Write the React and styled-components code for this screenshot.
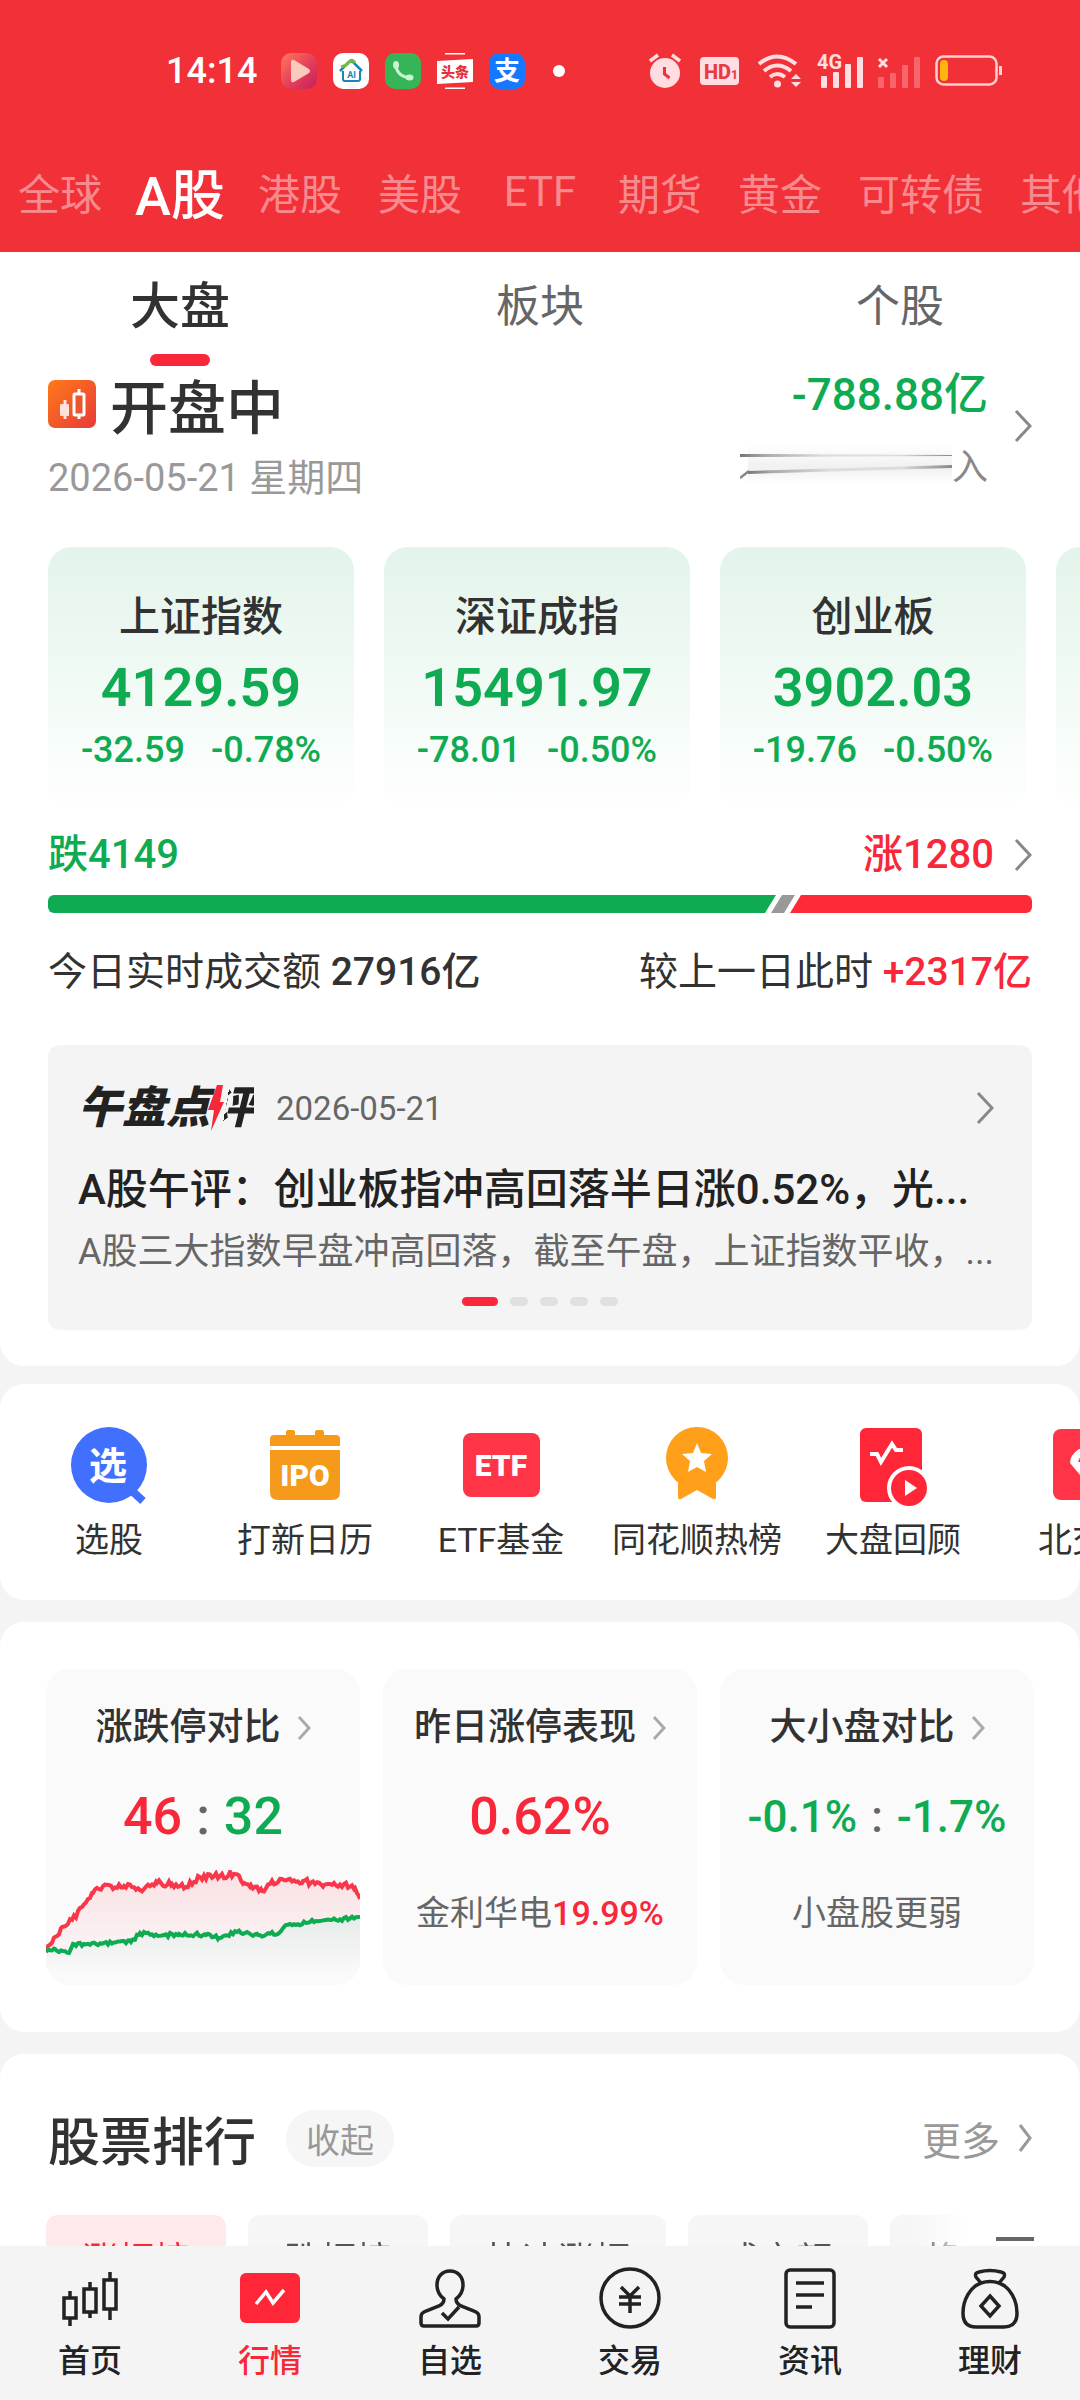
import React from "react"
import styled, { createGlobalStyle, css } from "styled-components"

const red = "#f8273a"
const green = "#0fab52"

const GlobalStyle = createGlobalStyle`
  * {
    box-sizing: border-box;
  }
  body {
    margin: 0;
    background: #f4f4f4;
    color: #323232;
    font-family: Roboto, "Noto Sans CJK SC", sans-serif;
    -webkit-font-smoothing: antialiased;
  }
  button {
    border: 0;
    padding: 0;
    background: none;
    color: inherit;
    font: inherit;
  }
  a {
    color: inherit;
    text-decoration: none;
  }
  h2, h3, p {
    margin: 0;
    font-weight: 400;
  }
  svg {
    display: block;
    flex: none;
  }
`

const Shell = styled.div`
  display: grid;
  grid-template-rows: minmax(0, 1fr) auto;
  height: 100vh;
  overflow: hidden;
`

const Content = styled.main`
  min-height: 0;
  overflow: hidden;
`

/* header */

const Header = styled.header`
  padding-top: 51px;
  background: #f23037;
  color: #fff;
`

const StatusBar = styled.div`
  display: flex;
  align-items: center;
  justify-content: space-between;
  height: 40px;
  padding: 0 77px 0 166px;
`

const StatusGroup = styled.div`
  display: flex;
  align-items: center;
  gap: ${({ $gap }) => $gap}px;
`

const Clock = styled.span`
  margin-right: 8px;
  font-size: 36px;
  font-weight: 500;
`

const Dot = styled.span`
  width: 12px;
  height: 12px;
  margin-left: 12px;
  border-radius: 50%;
  background: #fff;
`

const MarketNav = styled.nav`
  display: flex;
  gap: 36px;
  margin-top: 68px;
  padding: 0 18px 29px;
  overflow: hidden;
`

const MarketTab = styled.button`
  display: flex;
  flex: none;
  align-items: center;
  justify-content: center;
  width: ${({ $wide }) => ($wide ? 126 : 84)}px;
  height: 64px;
  color: rgba(255, 255, 255, 0.45);
  font-size: 42px;
  white-space: nowrap;
  ${({ $active }) =>
    $active &&
    css`
      color: #fff;
      font-size: 54px;
      font-weight: 500;
    `}
`

/* panels */

const Panel = styled.section`
  margin-top: ${({ $first }) => ($first ? 0 : 22)}px;
  border-radius: ${({ $first }) => ($first ? "0 0 24px 24px" : "24px")};
  background: #fff;
  overflow: hidden;
`

const SubTabs = styled.nav`
  display: grid;
  grid-template-columns: repeat(3, 1fr);
  padding-top: 25px;
`

const SubTab = styled.button`
  display: flex;
  flex-direction: column;
  align-items: center;
  gap: 17px;
  color: #666;
  font-size: 44px;
  line-height: 60px;
  &::after {
    content: "";
    width: 60px;
    height: 12px;
    border-radius: 6px;
    background: ${({ $active }) => ($active ? red : "transparent")};
  }
  ${({ $active }) =>
    $active &&
    css`
      color: #323232;
      font-size: 50px;
      font-weight: 500;
    `}
`

const Summary = styled.div`
  display: flex;
  align-items: flex-start;
  justify-content: space-between;
  padding: 4px 48px 0;
`

const MarketState = styled.h2`
  display: flex;
  align-items: center;
  gap: 14px;
  height: 68px;
  font-size: 58px;
  font-weight: 500;
`

const Today = styled.p`
  margin-top: 15px;
  color: #999;
  font-size: 38px;
  line-height: 50px;
`

const FlowLink = styled.a`
  display: flex;
  align-items: center;
  gap: 26px;
`

const FlowValue = styled.div`
  color: ${green};
  font-size: 44px;
  font-weight: 500;
  line-height: 50px;
  text-align: right;
`

const FlowLabel = styled.div`
  display: flex;
  align-items: center;
  justify-content: flex-end;
  height: 36px;
  margin-top: 26px;
  color: #888;
  font-size: 36px;
`

const IndexRow = styled.div`
  display: grid;
  grid-auto-flow: column;
  grid-auto-columns: calc((100% - 114px) / 3);
  gap: 30px;
  padding: 44px 0 0 48px;
  overflow: hidden;
`

const IndexCard = styled.a`
  height: 266px;
  padding-top: 45px;
  border-radius: 24px;
  background: linear-gradient(#e3f4ea, #f1faf5 50%, #fff);
  text-align: center;
  white-space: nowrap;
`

const IndexName = styled.h3`
  font-size: 41px;
  font-weight: 500;
  line-height: 50px;
`

const IndexPrice = styled.div`
  margin-top: 16px;
  color: ${green};
  font-size: 54px;
  font-weight: 600;
  line-height: 60px;
`

const IndexChange = styled.div`
  display: flex;
  justify-content: center;
  gap: 26px;
  margin-top: 12px;
  color: ${green};
  font-size: 36px;
  font-weight: 500;
  line-height: 40px;
`

const Row = styled.div`
  display: flex;
  align-items: center;
  justify-content: space-between;
  margin-top: ${({ $top }) => $top}px;
  padding: 0 48px;
  font-size: ${({ $size }) => $size}px;
  line-height: 50px;
`

const Tone = styled.span`
  color: ${({ $color }) => $color};
  font-weight: 500;
`

const WithArrow = styled.a`
  display: flex;
  align-items: center;
  gap: 20px;
`

const BreadthBar = styled.div`
  display: flex;
  height: 18px;
  margin: 15px 48px 0;
`

const FallPart = styled.div`
  flex: 728 1 0;
  border-radius: 6px 0 0 6px;
  background: ${green};
  clip-path: polygon(0 0, 100% 0, calc(100% - 11px) 100%, 0 100%);
`

const FlatPart = styled.div`
  flex: none;
  width: 24px;
  margin: 0 -5px;
  background: #999;
  clip-path: polygon(11px 0, 100% 0, calc(100% - 11px) 100%, 0 100%);
`

const RisePart = styled.div`
  flex: 242 1 0;
  border-radius: 0 6px 6px 0;
  background: #ff2a38;
  clip-path: polygon(11px 0, 100% 0, 100% 100%, 0 100%);
`

/* commentary */

const Commentary = styled.article`
  margin: 48px 48px 36px;
  padding: 33px 30px 24px;
  border-radius: 12px;
  background: #f4f4f4;
`

const CommentaryHead = styled.div`
  display: flex;
  align-items: center;
  height: 60px;
  padding-right: 8px;
  color: #666;
  font-size: 33px;
`

const CommentaryLogo = styled.h2`
  position: relative;
  margin-right: 22px;
  color: #222;
  font-size: 44px;
  font-style: italic;
  font-weight: 900;
  line-height: 60px;
  svg {
    position: absolute;
    top: 7px;
    left: 130px;
  }
`

/* the left part of the last character gives way to the bolt */
const HalfChar = styled.span`
  background: linear-gradient(100deg, transparent 38%, #222 38%);
  background-clip: text;
  -webkit-background-clip: text;
  color: transparent;
`

const PushRight = styled.span`
  margin-left: auto;
`

const Headline = styled.h3`
  margin-top: 24px;
  color: #222;
  font-size: 42px;
  font-weight: 500;
  line-height: 56px;
  white-space: nowrap;
  overflow: hidden;
  text-overflow: ellipsis;
`

const Excerpt = styled.p`
  margin-top: 10px;
  color: #666;
  font-size: 36px;
  line-height: 48px;
  white-space: nowrap;
  overflow: hidden;
  text-overflow: ellipsis;
`

const Pager = styled.div`
  display: flex;
  justify-content: center;
  gap: 12px;
  margin-top: 21px;
`

const PagerDot = styled.span`
  width: ${({ $active }) => ($active ? 36 : 18)}px;
  height: 9px;
  border-radius: 5px;
  background: ${({ $active }) => ($active ? red : "#e0e0e0")};
`

/* shortcuts */

const ShortcutPanel = styled(Panel)`
  display: flex;
  margin-top: 18px;
  padding: 32px 0 40px 11px;
`

const Shortcut = styled.a`
  display: flex;
  flex: none;
  flex-direction: column;
  align-items: center;
  gap: 8px;
  width: 196px;
  font-size: 34px;
  line-height: 40px;
  white-space: nowrap;
`

/* comparison cards */

const ComparePanel = styled(Panel)`
  display: grid;
  grid-template-columns: repeat(3, minmax(0, 1fr));
  gap: 23px;
  padding: 47px 46px;
`

const CompareCard = styled.a`
  display: flex;
  flex-direction: column;
  align-items: center;
  height: 316px;
  padding-top: 34px;
  border-radius: 24px;
  background: #fafafa;
  overflow: hidden;
  white-space: nowrap;
`

const CompareTitle = styled.h3`
  display: flex;
  align-items: center;
  gap: 16px;
  font-size: 37px;
  font-weight: 500;
  line-height: 50px;
`

const CompareValue = styled.div`
  display: flex;
  gap: 14px;
  margin-top: 34px;
  color: #666;
  font-size: ${({ $small }) => ($small ? 44 : 52)}px;
  font-weight: 500;
  line-height: 60px;
`

const CompareNote = styled.p`
  margin-top: 44px;
  color: #666;
  font-size: 34px;
  line-height: 44px;
`

const Chart = styled.svg`
  width: 100%;
  height: 115px;
  margin-top: 23px;
`

/* ranking */

const RankHead = styled.div`
  display: flex;
  align-items: center;
  height: 60px;
  margin-top: 54px;
  padding: 0 48px;
  color: #999;
`

const RankTitle = styled.h2`
  margin-right: 30px;
  color: #323232;
  font-size: 52px;
  font-weight: 500;
`

const Collapse = styled.button`
  height: 57px;
  padding: 0 20px;
  border-radius: 29px;
  background: #f6f6f6;
  font-size: 34px;
`

const MoreLink = styled(WithArrow)`
  gap: 18px;
  margin-left: auto;
  font-size: 39px;
`

const ChipRow = styled.div`
  display: flex;
  margin-top: 47px;
  padding: 0 46px;
`

const ChipScroller = styled.div`
  display: flex;
  flex: 1;
  gap: 22px;
  min-width: 0;
  overflow: hidden;
  mask-image: linear-gradient(to right, #000 calc(100% - 80px), transparent calc(100% - 24px));
`

const Chip = styled.button`
  flex: none;
  height: 92px;
  padding: 0 36px;
  border-radius: 12px;
  background: ${({ $active }) => ($active ? "#ffe9ea" : "#f6f6f6")};
  color: ${({ $active }) => ($active ? red : "#555")};
  font-size: 36px;
  line-height: 92px;
`

const MenuButton = styled.button`
  display: flex;
  align-items: flex-start;
  padding-top: 22px;
`

/* bottom bar */

const BottomBar = styled.nav`
  display: grid;
  grid-template-columns: repeat(6, 1fr);
  padding: 20px 0 19px;
  background: #f4f4f4;
`

const BottomItem = styled.a`
  display: flex;
  flex-direction: column;
  align-items: center;
  gap: 11px;
  color: ${({ $active }) => ($active ? red : "#222")};
  font-size: 32px;
  font-weight: 500;
  line-height: 40px;
`

const Chevron = ({ width = 18, height = 34, color = "#888", stroke = 3 }) => (
  <svg width={width} height={height} viewBox={`0 0 ${width} ${height}`} fill="none">
    <path
      d={`M2 2 L${width - 2} ${height / 2} L2 ${height - 2}`}
      stroke={color}
      strokeWidth={stroke}
    />
  </svg>
)

const AppIcons = () => (
  <>
    <svg width="36" height="36" viewBox="0 0 36 36">
      <defs>
        <linearGradient id="play" x1="0" y1="0" x2="1" y2="1">
          <stop offset="0" stopColor="#ff7a5c" />
          <stop offset="0.5" stopColor="#e8415a" />
          <stop offset="1" stopColor="#c4205c" />
        </linearGradient>
      </defs>
      <rect width="36" height="36" rx="10" fill="url(#play)" />
      <path d="M10 9q0-3 3-2l15 9q2 2 0 4l-15 9q-3 1-3-2z" fill="#fcc9bd" />
    </svg>
    <svg width="36" height="36" viewBox="0 0 36 36" fill="none">
      <rect width="36" height="36" rx="10" fill="#fff" />
      <path d="M7 18 16 9q2-1 4 0l9 9" stroke="#1786b8" strokeWidth="2.5" />
      <path d="M8 14q5-1 8-5t6 1" stroke="#7db83c" strokeWidth="3" />
      <path d="M10 18v8q0 2 2 2h13q2 0 2-2v-8" stroke="#1786b8" strokeWidth="2" />
      <text x="18.5" y="25" fill="#1786b8" fontSize="9" fontWeight="700" textAnchor="middle">AI</text>
    </svg>
    <svg width="36" height="36" viewBox="0 0 36 36" fill="none">
      <rect width="36" height="36" rx="10" fill="#35b558" />
      <path d="M11 11q0 12 14 14" stroke="#c9f5d3" strokeWidth="3" />
      <ellipse cx="11" cy="12" rx="3" ry="4" fill="#c9f5d3" />
      <ellipse cx="24.5" cy="24.5" rx="4" ry="3" fill="#c9f5d3" />
    </svg>
    <svg width="36" height="36" viewBox="0 0 36 36">
      <path d="M8 .8h20M8 35.2h20" stroke="#fff" strokeWidth="1.5" />
      <path d="M0 8l36-2v23l-36 2z" fill="#fff" />
      <text x="18" y="24" fill="#e8303c" fontSize="14" fontWeight="900" textAnchor="middle">头条</text>
    </svg>
    <svg width="36" height="36" viewBox="0 0 36 36">
      <rect width="36" height="36" rx="10" fill="#1677ff" />
      <text x="18" y="27" fill="#fff" fontSize="26" fontWeight="700" textAnchor="middle">支</text>
    </svg>
  </>
)

const SystemIcons = () => (
  <>
    <svg width="37" height="36" viewBox="0 0 37 36" fill="none">
      <circle cx="16" cy="20" r="15" fill="#ffdde0" />
      <path d="M1 8l8-6M31 8l-8-6" stroke="#ffdde0" strokeWidth="3.5" />
      <path d="M15.5 14v7l5 4" stroke="#f23037" strokeWidth="3" />
    </svg>
    <svg width="43" height="28" viewBox="0 0 43 28">
      <rect width="39" height="28" rx="4" fill="#ffdde0" />
      <text x="4" y="22" fill="#e83a42" fontSize="20" fontWeight="800" fontFamily="Roboto">
        HD
      </text>
      <text x="31" y="22" fill="#e83a42" fontSize="12" fontWeight="800" fontFamily="Roboto">
        1
      </text>
    </svg>
    <svg width="46" height="34" viewBox="0 0 46 34" fill="none">
      <path d="M2 10q18-15 37 0M7 17q13-11 27 0M13 23q7-6 15 0" stroke="#ffdde0" strokeWidth="4" />
      <circle cx="20.5" cy="30" r="3.5" fill="#ffdde0" />
      <path d="M34 25l5-5 5 5zM34 28l5 5 5-5z" fill="#ffdde0" />
    </svg>
    <svg width="46" height="42" viewBox="0 -4 46 42" fill="#ffdde0">
      <text x="0" y="15" fontSize="20" fontWeight="700" fontFamily="Roboto">4G</text>
      <rect x="4" y="22" width="6" height="12" rx="1" />
      <rect x="16" y="18" width="6" height="16" rx="1" />
      <rect x="28" y="10" width="6" height="24" rx="1" />
      <rect x="40" y="3" width="6" height="31" rx="1" />
    </svg>
    <svg width="44" height="34" viewBox="0 0 44 34" fill="#f8656b">
      <path d="M2 5l8 8M10 5l-8 8" stroke="#ffdde0" strokeWidth="3" />
      <rect x="1" y="23" width="6" height="11" rx="1" />
      <rect x="13" y="19" width="6" height="15" rx="1" />
      <rect x="25" y="11" width="6" height="23" rx="1" />
      <rect x="37" y="3" width="6" height="31" rx="1" />
    </svg>
    <svg width="68" height="32" viewBox="0 0 68 32" fill="none">
      <rect x="1.5" y="1.5" width="60" height="28" rx="7" stroke="#ffd0d0" strokeWidth="2.5" />
      <rect x="5" y="5" width="8" height="21" rx="4" fill="#fdb50f" />
      <path d="M65.5 11v9" stroke="#ffd0d0" strokeWidth="3" />
    </svg>
  </>
)

const StateIcon = () => (
  <svg width="48" height="48" viewBox="0 0 48 48">
    <defs>
      <linearGradient id="state" x1="0" y1="0" x2="1" y2="1">
        <stop offset="0" stopColor="#ff7a18" />
        <stop offset="1" stopColor="#e83a3a" />
      </linearGradient>
    </defs>
    <rect width="48" height="48" rx="7" fill="url(#state)" />
    <path d="M17 20v19" stroke="#ffe3da" strokeWidth="3" />
    <rect x="12" y="24" width="9" height="12" rx="1" fill="#ffe3da" />
    <path d="M31 9v30" stroke="#fff" strokeWidth="3" />
    <rect x="26" y="14" width="10" height="21" rx="1" fill="#e9562f" stroke="#fff" strokeWidth="3" />
  </svg>
)

const FlowStreaks = () => (
  <svg width="212" height="40" viewBox="0 0 212 40">
    <defs>
      <linearGradient id="streak" x1="0" y1="0" x2="1" y2="0">
        <stop offset="0" stopColor="#777" />
        <stop offset="0.12" stopColor="#aaa" />
        <stop offset="0.4" stopColor="#ddd" />
        <stop offset="0.75" stopColor="#ddd" />
        <stop offset="1" stopColor="#888" />
      </linearGradient>
      <linearGradient id="haze" x1="0" y1="0" x2="0" y2="1">
        <stop offset="0" stopColor="#999" stopOpacity="0" />
        <stop offset="0.6" stopColor="#999" stopOpacity="0.14" />
        <stop offset="1" stopColor="#999" stopOpacity="0" />
      </linearGradient>
    </defs>
    <rect x="8" y="0" width="204" height="40" fill="url(#haze)" />
    <path d="M0 10h10l202 1v1l-202 1h-10z" fill="url(#streak)" />
    <path d="M8 27l204-6v3l-204 6z" fill="url(#streak)" />
    <path d="M0 34l9-7" stroke="#888" strokeWidth="2.5" />
  </svg>
)

const shortcuts = [
  {
    label: "选股",
    icon: (
      <>
        <circle cx="48" cy="49" r="38" fill="#4170ff" />
        <path d="M70 74l12 11" stroke="#4170ff" strokeWidth="8" />
        <text x="47" y="63" fill="#fff" fontSize="38" fontWeight="700" textAnchor="middle">选</text>
      </>
    ),
  },
  {
    label: "打新日历",
    icon: (
      <g fill="#f59a1b">
        <path d="M13 30v-7q0-4 4-4h12v-3q0-2 2-2h5q2 0 2 2v3h20v-3q0-2 2-2h5q2 0 2 2v3h12q4 0 4 4v7z" />
        <path d="M13 34h70v42q0 8-8 8h-54q-8 0-8-8z" />
        <text x="48" y="70" fill="#fff" fontSize="30" fontWeight="900" textAnchor="middle">IPO</text>
      </g>
    ),
  },
  {
    label: "ETF基金",
    icon: (
      <>
        <rect x="10" y="17" width="77" height="64" rx="8" fill="#ff3446" />
        <text x="48" y="60" fill="#fff" fontSize="30" fontWeight="900" textAnchor="middle">ETF</text>
      </>
    ),
  },
  {
    label: "同花顺热榜",
    icon: (
      <>
        <circle cx="48" cy="42" r="31" fill="#ff9f1a" />
        <path d="M29 60h38v21q0 3-3 2l-16-9-16 9q-3 1-3-2z" fill="#ff9f1a" />
        <path d="M48 27l4 10 11 1-8 7 2 11-9-5-9 5 2-11-8-7 11-1z" fill="#fff" />
      </>
    ),
  },
  {
    label: "大盘回顾",
    icon: (
      <>
        <rect x="15" y="12" width="62" height="74" rx="6" fill="#ff2637" />
        <path d="M25 38h7l4 8 11-18 4 6h7" fill="none" stroke="#fff" strokeWidth="4" />
        <circle cx="64" cy="72" r="22" fill="#fff" />
        <circle cx="64" cy="72" r="18" fill="#ff2637" />
        <path d="M60 64v16l12-8z" fill="#fff" />
      </>
    ),
  },
  {
    label: "北交所",
    icon: (
      <>
        <rect x="12" y="13" width="72" height="71" rx="8" fill="#ff3446" />
        <path d="M29 47q0-8 9-14h20q9 6 9 14l-19 23z" fill="#fff" />
        <path d="M37 46q2-7 9-8v8z" fill="#ff3446" />
      </>
    ),
  },
]

const indexes = [
  { name: "上证指数", price: "4129.59", diff: "-32.59", pct: "-0.78%" },
  { name: "深证成指", price: "15491.97", diff: "-78.01", pct: "-0.50%" },
  { name: "创业板", price: "3902.03", diff: "-19.76", pct: "-0.50%" },
]

const bottomItems = [
  {
    label: "首页",
    icon: (
      <>
        <path d="M12 25v7M12 52v8M32 16v7M32 46v6M52 6v8M52 43v11" />
        <rect x="6" y="32" width="12" height="20" />
        <rect x="26" y="23" width="12" height="23" />
        <rect x="46" y="14" width="12" height="29" />
      </>
    ),
  },
  {
    label: "行情",
    active: true,
    icon: (
      <>
        <rect x="2" y="7" width="60" height="50" rx="6" fill="#ff2637" stroke="none" />
        <path d="M18 38l10-12 7 11 11-13" stroke="#fff" />
      </>
    ),
  },
  {
    label: "自选",
    icon: (
      <>
        <path d="M32 5C24 5 19 11 19 19C19 25 22 30 26 33C26 36 25 38 21 40L8 45C4 47 3 48 3 51V57Q3 60 6 60H58Q61 60 61 57V51C61 48 60 47 56 45L43 40C39 38 38 36 38 33C42 30 45 25 45 19C45 11 40 5 32 5Z" />
        <path d="M24 47l6 6 11-12" />
      </>
    ),
  },
  {
    label: "交易",
    icon: (
      <>
        <circle cx="32" cy="32" r="29" />
        <path d="M23 21l9 9 9-9M32 30v17M21 31h22M21 38h22" />
      </>
    ),
  },
  {
    label: "资讯",
    icon: (
      <>
        <rect x="8" y="4" width="48" height="57" rx="4" />
        <path d="M18 17h28M18 29h28M18 41h16" />
      </>
    ),
  },
  {
    label: "理财",
    icon: (
      <>
        <path d="M23 17L18 11Q16 7 21 6Q32 3 43 6Q48 7 46 11L41 17" />
        <path d="M23 17C12 21 5 34 5 47C5 57 10 61 18 61H46C54 61 59 57 59 47C59 34 52 21 41 17Q32 14 23 17Z" />
        <path d="M32 30l9 10-9 10-9-10z" />
      </>
    ),
  },
]

const upLine = [
  [0, 82], [9, 67], [16, 57], [26, 50], [36, 37], [47, 23], [57, 16], [67, 19], [78, 16],
  [98, 19], [111, 13], [126, 14], [140, 17], [154, 7], [174, 6], [189, 4], [198, 13],
  [205, 15], [216, 21], [224, 14], [236, 9], [257, 11], [278, 15], [298, 14], [309, 18], [314, 29],
]

const downLine = [
  [0, 82], [9, 79], [23, 83], [28, 74], [50, 74], [85, 72], [94, 63], [112, 66], [133, 64],
  [160, 65], [173, 68], [191, 62], [212, 65], [233, 63], [240, 55], [264, 52], [284, 50], [314, 47],
]

// fills in the minute ticks between two known points
const toPath = (points, swing) => {
  const out = []
  points.forEach(([x, y], i) => {
    const next = points[i + 1]
    out.push(`${x} ${y}`)
    if (!next) return
    for (let step = x + 2; step < next[0]; step += 2) {
      const level = y + ((next[1] - y) * (step - x)) / (next[0] - x)
      const tick = Math.sin(step * 12.9898) * 43758.5453
      out.push(`${step} ${(level + (tick - Math.floor(tick) - 0.5) * swing).toFixed(1)}`)
    }
  })
  return `M${out.join("L")}`
}

const LimitChart = () => {
  const up = toPath(upLine, 6)
  const down = toPath(downLine, 4)
  return (
    <Chart viewBox="0 0 314 115" preserveAspectRatio="none" fill="none">
      <defs>
        <linearGradient id="up" x1="0" y1="0" x2="0" y2="1">
          <stop offset="0" stopColor="#f8273a" stopOpacity="0.12" />
          <stop offset="1" stopColor="#f8273a" stopOpacity="0.02" />
        </linearGradient>
        <linearGradient id="down" x1="0" y1="0" x2="0" y2="1">
          <stop offset="0" stopColor="#e6ebe8" />
          <stop offset="1" stopColor="#fafafa" />
        </linearGradient>
      </defs>
      <path d={`${up}V90H0Z`} fill="url(#up)" />
      <path d={`${down}V105H0Z`} fill="url(#down)" />
      <path d={up} stroke="#f8374a" strokeWidth="4" />
      <path d={down} stroke={green} strokeWidth="4" />
    </Chart>
  )
}

export default function App() {
  return (
    <>
      <GlobalStyle />
      <Shell>
        <Content>
          <Header>
            <StatusBar>
              <StatusGroup $gap={16}>
                <Clock>14:14</Clock>
                <AppIcons />
                <Dot />
              </StatusGroup>
              <StatusGroup $gap={14}>
                <SystemIcons />
              </StatusGroup>
            </StatusBar>
            <MarketNav>
              {["全球", "A股", "港股", "美股", "ETF", "期货", "黄金", "可转债", "其他"].map(name => (
                <MarketTab key={name} $active={name === "A股"} $wide={name === "可转债"}>
                  {name}
                </MarketTab>
              ))}
            </MarketNav>
          </Header>

          <Panel $first>
            <SubTabs>
              <SubTab $active>大盘</SubTab>
              <SubTab>板块</SubTab>
              <SubTab>个股</SubTab>
            </SubTabs>
            <Summary>
              <div>
                <MarketState>
                  <StateIcon />
                  开盘中
                </MarketState>
                <Today>2026-05-21 星期四</Today>
              </div>
              <FlowLink href="#flow">
                <div>
                  <FlowValue>-788.88亿</FlowValue>
                  <FlowLabel>
                    <FlowStreaks />入
                  </FlowLabel>
                </div>
                <Chevron />
              </FlowLink>
            </Summary>

            <IndexRow>
              {indexes.map(item => (
                <IndexCard key={item.name} href="#index">
                  <IndexName>{item.name}</IndexName>
                  <IndexPrice>{item.price}</IndexPrice>
                  <IndexChange>
                    <span>{item.diff}</span>
                    <span>{item.pct}</span>
                  </IndexChange>
                </IndexCard>
              ))}
              <IndexCard as="div" />
            </IndexRow>

            <Row $top={17} $size={40}>
              <Tone $color={green}>跌4149</Tone>
              <WithArrow href="#breadth">
                <Tone $color={red}>涨1280</Tone>
                <Chevron />
              </WithArrow>
            </Row>
            <BreadthBar>
              <FallPart />
              <FlatPart />
              <RisePart />
            </BreadthBar>
            <Row $top={34} $size={39}>
              <span>
                今日实时成交额 <Tone $color="#323232">27916亿</Tone>
              </span>
              <span>
                较上一日此时 <Tone $color={red}>+2317亿</Tone>
              </span>
            </Row>

            <Commentary>
              <CommentaryHead>
                <CommentaryLogo>
                  午盘点<HalfChar>评</HalfChar>
                  <svg width="16" height="46" viewBox="0 0 16 46">
                    <path d="M9 0h6l-3 17h4L3 46l3-21H0z" fill={red} />
                  </svg>
                </CommentaryLogo>
                2026-05-21
                <PushRight>
                  <Chevron />
                </PushRight>
              </CommentaryHead>
              <Headline>A股午评：创业板指冲高回落半日涨0.52%，光...</Headline>
              <Excerpt>A股三大指数早盘冲高回落，截至午盘，上证指数平收，...</Excerpt>
              <Pager>
                {[0, 1, 2, 3, 4].map(page => (
                  <PagerDot key={page} $active={page === 0} />
                ))}
              </Pager>
            </Commentary>
          </Panel>

          <ShortcutPanel>
            {shortcuts.map(item => (
              <Shortcut key={item.label} href="#shortcut">
                <svg width="96" height="96" viewBox="0 0 96 96">
                  {item.icon}
                </svg>
                {item.label}
              </Shortcut>
            ))}
          </ShortcutPanel>

          <ComparePanel>
            <CompareCard href="#limit">
              <CompareTitle>
                涨跌停对比
                <Chevron width={14} height={26} color="#aaa" />
              </CompareTitle>
              <CompareValue>
                <Tone $color={red}>46</Tone>:<Tone $color={green}>32</Tone>
              </CompareValue>
              <LimitChart />
            </CompareCard>
            <CompareCard href="#yesterday">
              <CompareTitle>
                昨日涨停表现
                <Chevron width={14} height={26} color="#aaa" />
              </CompareTitle>
              <CompareValue>
                <Tone $color={red}>0.62%</Tone>
              </CompareValue>
              <CompareNote>
                金利华电<Tone $color={red}>19.99%</Tone>
              </CompareNote>
            </CompareCard>
            <CompareCard href="#size">
              <CompareTitle>
                大小盘对比
                <Chevron width={14} height={26} color="#aaa" />
              </CompareTitle>
              <CompareValue $small>
                <Tone $color={green}>-0.1%</Tone>:<Tone $color={green}>-1.7%</Tone>
              </CompareValue>
              <CompareNote>小盘股更弱</CompareNote>
            </CompareCard>
          </ComparePanel>

          <Panel>
            <RankHead>
              <RankTitle>股票排行</RankTitle>
              <Collapse>收起</Collapse>
              <MoreLink href="#more">
                更多
                <Chevron width={14} height={30} color="#999" />
              </MoreLink>
            </RankHead>
            <ChipRow>
              <ChipScroller>
                {["涨幅榜", "跌幅榜", "快速涨幅", "成交额", "换手率"].map(name => (
                  <Chip key={name} $active={name === "涨幅榜"}>
                    {name}
                  </Chip>
                ))}
              </ChipScroller>
              <MenuButton aria-label="菜单">
                <svg width="40" height="36" viewBox="0 0 40 36">
                  <path d="M2 2h38M2 18h38M2 34h38" stroke="#666" strokeWidth="4" />
                </svg>
              </MenuButton>
            </ChipRow>
          </Panel>
        </Content>

        <BottomBar>
          {bottomItems.map(item => (
            <BottomItem key={item.label} href="#tab" $active={item.active}>
              <svg width="64" height="64" viewBox="0 0 64 64" fill="none" stroke="currentColor" strokeWidth="3.5">
                {item.icon}
              </svg>
              {item.label}
            </BottomItem>
          ))}
        </BottomBar>
      </Shell>
    </>
  )
}
